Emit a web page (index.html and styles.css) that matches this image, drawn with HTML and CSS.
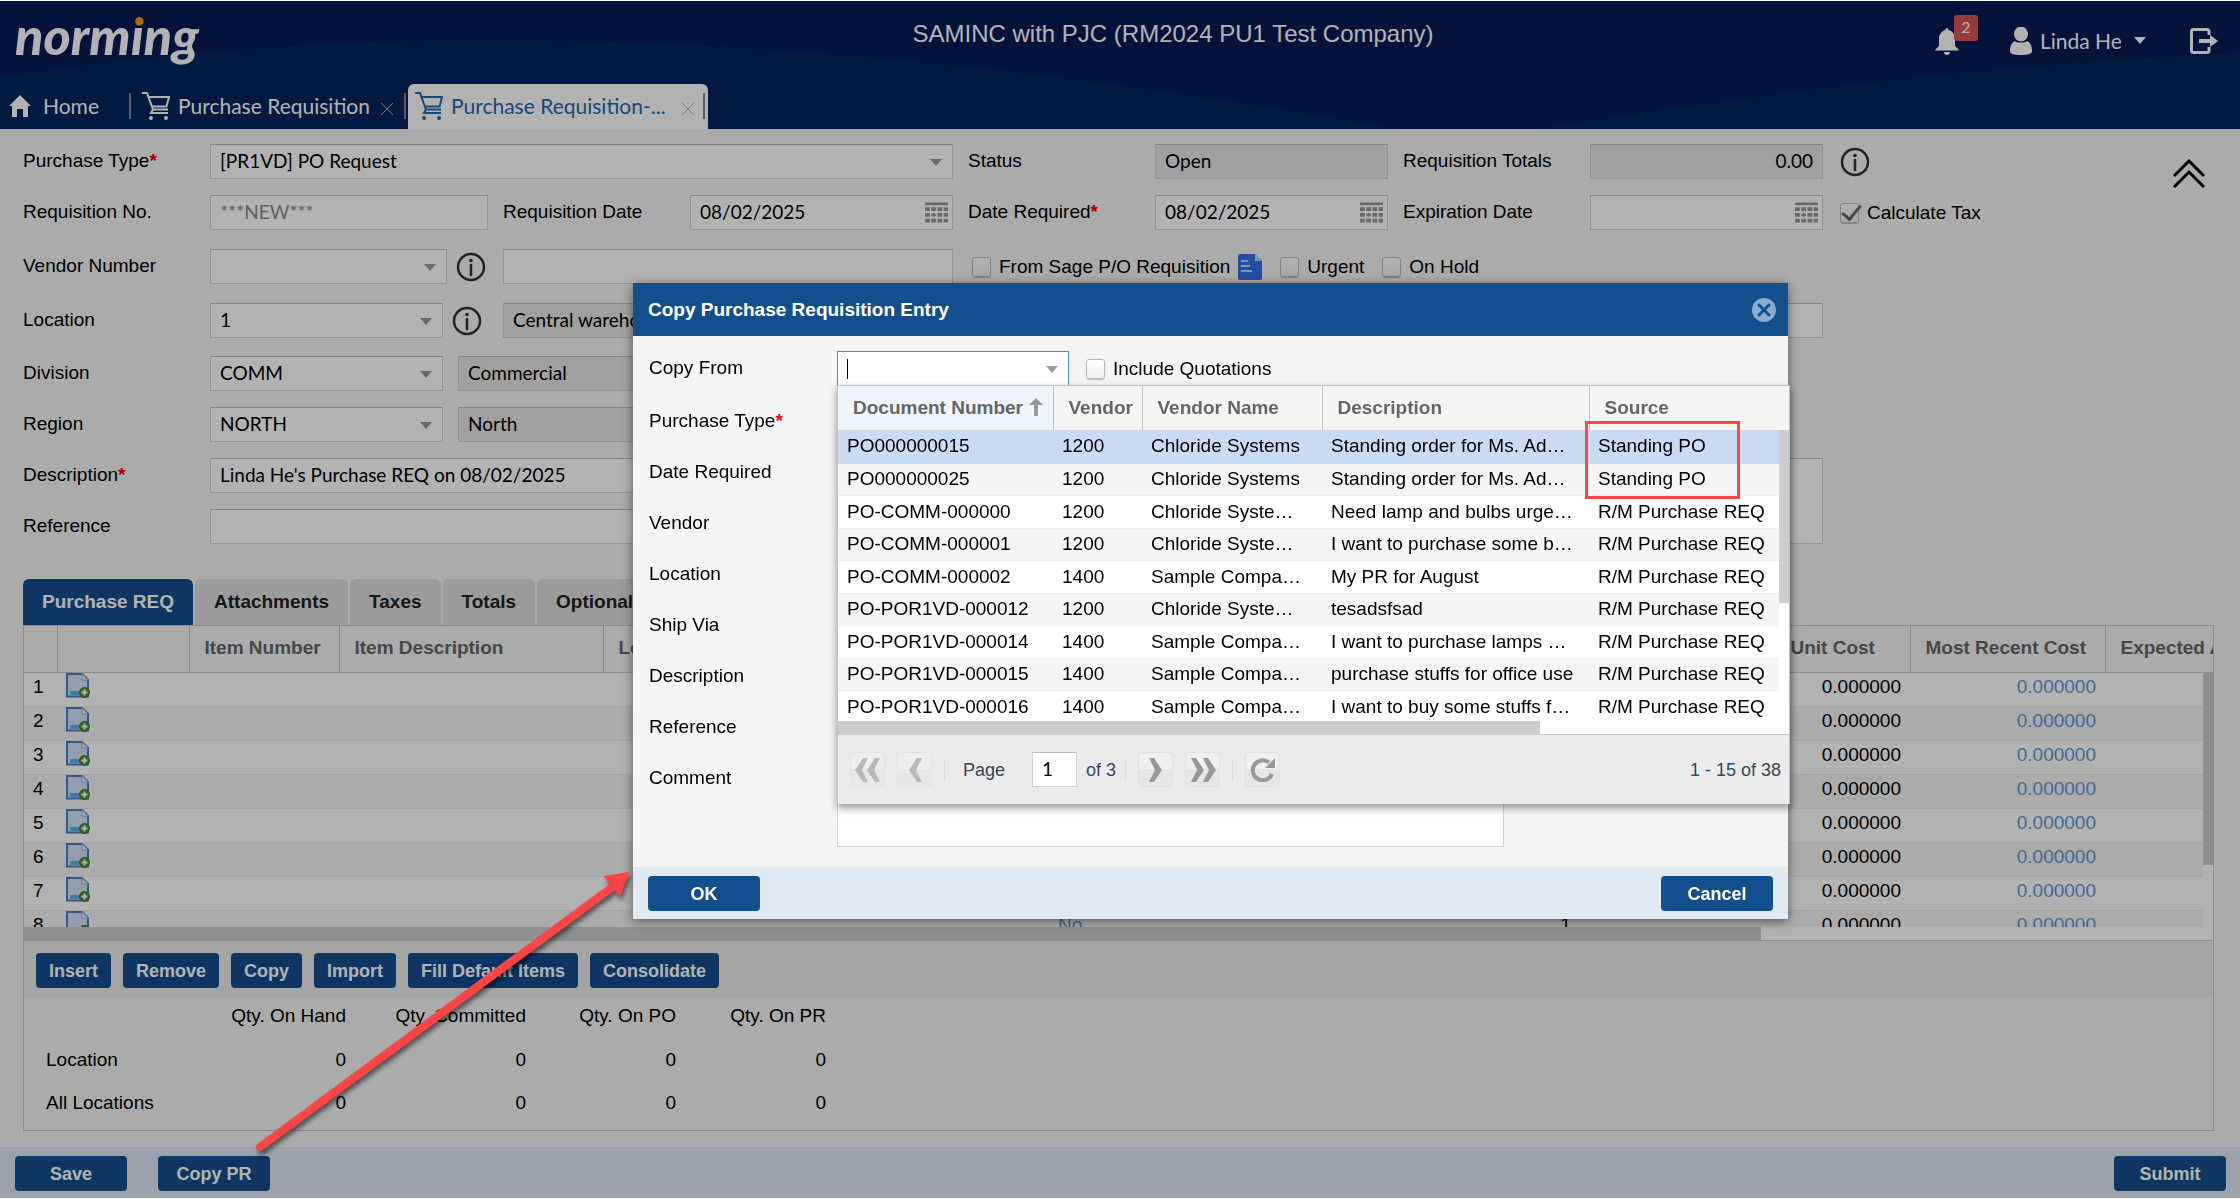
FILE: index.html
```html
<!DOCTYPE html>
<html lang="en">
<head>
  <meta charset="UTF-8">
  <title>Purchase Requisition</title>
  <meta name="viewport" content="width=device-width, initial-scale=1">
  <link rel="stylesheet" href="styles.css">
</head>
<body>
  <svg class="defs" aria-hidden="true">
    <symbol id="i-cart" viewBox="0 0 28 28">
      <path d="M0 1h5l6 16.5h15M6 5h21l-2.500 9.500H10M11 17.500l-2 3.500h17" fill="none" stroke="currentColor" stroke-width="2"/>
      <circle cx="9" cy="26" r="2" fill="currentColor"/><circle cx="24" cy="26" r="2" fill="currentColor"/>
    </symbol>
    <symbol id="i-info" viewBox="0 0 30 30">
      <circle cx="15" cy="15" r="13" fill="none" stroke="#333" stroke-width="2.500"/>
      <circle cx="15" cy="8.500" r="1.800" fill="#333"/><path d="M15 13v10" stroke="#333" stroke-width="2.600" stroke-linecap="round"/>
    </symbol>
    <symbol id="i-cal" viewBox="0 0 24 22">
      <path d="M0 0h24v3H0zM0 5h5v4H0zM6.500 5h5v4h-5zM13 5h5v4h-5zM19.500 5H24v4h-4.500zM0 11h5v4H0zM8 11h2v4H8zM6.500 12h5v2h-5zM13 11h5v4h-5zM19.500 11H24v4h-4.500zM0 17h5v4H0zM6.500 17h5v4h-5zM13 17h5v4h-5zM19.500 17H24v4h-4.500z" fill="#999"/>
    </symbol>
    <symbol id="i-add" viewBox="0 0 24 25">
      <path d="M1 1h15l6 6v16.500H1z" fill="#cfe2f8" stroke="#4a7fc0" stroke-width="2"/>
      <path d="M16 1v6h6" fill="#f2f8ff" stroke="#8fb4de"/>
      <path d="M4 18h13v4H4z" fill="#5fb4e6"/>
      <circle cx="18.500" cy="19.500" r="5" fill="#4f8f2f" stroke="#3b7420"/>
      <path d="M18.500 16.500v6M15.500 19.500h6" stroke="#fff" stroke-width="2"/>
    </symbol>
  </svg>

  <div class="page">
    <header class="header">
      <svg class="waves" viewBox="0 0 2240 128" preserveAspectRatio="none" aria-hidden="true">
        <path d="M0 75C180 50 330 39 480 39C850 39 1150 85 1400 128H0z" fill="#03265e"/>
        <path d="M1530 128C1750 95 1950 65 2240 52V128z" fill="#03265e"/>
      </svg>
      <div class="header-top">
        <div class="logo">norm<span class="logo-i">i</span>ng</div>
        <div class="company">SAMINC with PJC (RM2024 PU1 Test Company)</div>
        <div class="user-area">
          <button class="bell" aria-label="Notifications">
            <svg width="24" height="27" viewBox="0 0 24 27"><path d="M12 0c1 0 1.500 1 1.500 2C18 3 20 7 20 11v6c0 2 3 3 4 5.500H0C1 20 4 19 4 17v-6c0-4 2-8 6.500-9 0-1 .5-2 1.500-2zM9 24h6c0 2-1.500 3-3 3s-3-1-3-3z" fill="#fff"/></svg>
            <span class="badge">2</span>
          </button>
          <button class="user">
            <svg width="22" height="28" viewBox="0 0 22 28"><ellipse cx="11" cy="7" rx="7" ry="7.500" fill="#fff"/><path d="M5 14c2 2 10 2 12 0 4 2 5 6 5 10 0 3-4 4-11 4S0 27 0 24c0-4 1-8 5-10z" fill="#fff"/></svg>
            Linda He
            <span class="caret"></span>
          </button>
          <button class="logout" aria-label="Log out">
            <svg width="28" height="26" viewBox="0 0 28 26"><path d="M19 7V3.500Q19 1.500 17 1.500H3.500Q1.500 1.500 1.500 3.500v19q0 2 2 2H17q2 0 2-2V19" fill="none" stroke="#fff" stroke-width="3"/><path d="M9 11h11V7l8 6-8 6v-4H9z" fill="#fff"/></svg>
          </button>
        </div>
      </div>
      <nav class="tabs">
        <a class="tab tab-home" href="#"><svg width="22" height="22" viewBox="0 0 22 22"><path d="M11 0l11 11h-3v11h-5v-8H8v8H3V11H0z" fill="#fff"/></svg>Home</a>
        <a class="tab tab-list" href="#"><svg class="cart"><use href="#i-cart"/></svg>Purchase Requisition<svg class="tab-x" viewBox="0 0 12 12"><path d="M0 0l12 12M12 0L0 12"/></svg></a>
        <a class="tab tab-active" href="#"><svg class="cart"><use href="#i-cart"/></svg>Purchase Requisition-...<svg class="tab-x tab-x-last" viewBox="0 0 12 12"><path d="M0 0l12 12M12 0L0 12"/></svg></a>
      </nav>
    </header>

    <main class="main">
      <section class="form">
        <div class="row">
          <div class="group group-main">
            <label for="ptype">Purchase Type<b class="req">*</b></label>
            <div class="combo grow"><select id="ptype" class="field"><option>[PR1VD] PO Request</option></select></div>
          </div>
          <div class="group">
            <label for="status">Status</label>
            <input id="status" class="field grow" value="Open" readonly>
          </div>
          <div class="group">
            <label for="totals">Requisition Totals</label>
            <input id="totals" class="field grow num" value="0.00" readonly>
          </div>
          <svg class="info"><use href="#i-info"/></svg>
          <button class="collapse" aria-label="Collapse"><svg width="32" height="29" viewBox="0 0 32 29" fill="none" stroke="#000" stroke-width="3"><path d="M1 17L16 2l15 15M1 28l15-15 15 15"/></svg></button>
        </div>

        <div class="row row-wide">
          <div class="group group-main">
            <label for="reqno">Requisition No.</label>
            <input id="reqno" class="field w-reqno" placeholder="***NEW***">
            <label for="reqdate" class="label-next">Requisition Date</label>
            <div class="date grow"><input id="reqdate" class="field" value="08/02/2025"><svg><use href="#i-cal"/></svg></div>
          </div>
          <div class="group">
            <label for="datereq">Date Required<b class="req">*</b></label>
            <div class="date grow"><input id="datereq" class="field" value="08/02/2025"><svg><use href="#i-cal"/></svg></div>
          </div>
          <div class="group">
            <label for="expdate">Expiration Date</label>
            <div class="date grow"><input id="expdate" class="field"><svg><use href="#i-cal"/></svg></div>
          </div>
          <label class="check"><input type="checkbox" checked>Calculate Tax</label>
        </div>

        <div class="row row-wide">
          <div class="group group-main">
            <label for="vendno">Vendor Number</label>
            <div class="combo w-vendor"><select id="vendno" class="field"><option></option></select></div>
            <svg class="info info-look"><use href="#i-info"/></svg>
            <input class="field w-name" aria-label="Vendor name">
          </div>
          <div class="checks">
            <label class="check"><input type="checkbox">From Sage P/O Requisition</label>
            <svg class="doc" viewBox="0 0 24 26"><path d="M2 0h15l7 7v17q0 2-2 2H2q-2 0-2-2V2Q0 0 2 0z" fill="#3172e8"/><path d="M17 0l7 7h-7z" fill="#a8e4f0"/><path d="M3 7h7M3 12h9M3 17h11" stroke="#a8e4f0" stroke-width="2"/></svg>
            <label class="check"><input type="checkbox">Urgent</label>
            <label class="check"><input type="checkbox">On Hold</label>
          </div>
        </div>

        <div class="row row-loc">
          <div class="group group-main">
            <label for="loc">Location</label>
            <div class="combo w-combo"><select id="loc" class="field"><option>1</option></select></div>
            <svg class="info info-look"><use href="#i-info"/></svg>
            <input class="field w-name" aria-label="Location name" value="Central warehouse - Seattle" readonly>
          </div>
          <div class="group group-wide">
            <label for="shipvia">Ship Via</label>
            <input id="shipvia" class="field grow">
          </div>
        </div>

        <div class="row">
          <div class="group group-main">
            <label for="division">Division</label>
            <div class="combo w-combo"><select id="division" class="field"><option>COMM</option></select></div>
            <input class="field w-desc" aria-label="Division name" value="Commercial" readonly>
          </div>
        </div>

        <div class="row">
          <div class="group group-main">
            <label for="region">Region</label>
            <div class="combo w-combo"><select id="region" class="field"><option>NORTH</option></select></div>
            <input class="field w-desc" aria-label="Region name" value="North" readonly>
          </div>
        </div>

        <div class="row row-notes">
          <div class="group-main">
            <div class="group group-stack">
              <label for="desc">Description<b class="req">*</b></label>
              <input id="desc" class="field grow" value="Linda He's Purchase REQ on 08/02/2025">
            </div>
            <div class="group">
              <label for="ref">Reference</label>
              <input id="ref" class="field grow">
            </div>
          </div>
          <div class="group group-wide">
            <label for="comment">Comment</label>
            <textarea id="comment" class="field grow notes"></textarea>
          </div>
        </div>
      </section>

      <div class="subtabs">
        <button class="subtab subtab-on">Purchase REQ</button>
        <button class="subtab">Attachments</button>
        <button class="subtab">Taxes</button>
        <button class="subtab">Totals</button>
        <button class="subtab">Optional Fields</button>
      </div>

      <section class="panel">
        <div class="grid">
          <table class="lines">
            <colgroup><col class="c-no"><col class="c-icon"><col class="c-item"><col class="c-desc"><col class="c-loc"><col class="c-com"><col class="c-qty"><col class="c-um"><col class="c-unit"><col class="c-cost"><col class="c-exp"></colgroup>
            <thead>
              <tr><th></th><th></th><th>Item Number</th><th>Item Description</th><th>Location</th><th></th><th></th><th></th><th>Unit Cost</th><th>Most Recent Cost</th><th>Expected Arrival</th></tr>
            </thead>
            <tbody>
              <tr><td>1</td><td><svg class="add"><use href="#i-add"/></svg></td><td></td><td></td><td></td><td class="link">No</td><td class="num">1</td><td></td><td class="num">0.000000</td><td class="num link">0.000000</td><td></td></tr>
              <tr><td>2</td><td><svg class="add"><use href="#i-add"/></svg></td><td></td><td></td><td></td><td class="link">No</td><td class="num">1</td><td></td><td class="num">0.000000</td><td class="num link">0.000000</td><td></td></tr>
              <tr><td>3</td><td><svg class="add"><use href="#i-add"/></svg></td><td></td><td></td><td></td><td class="link">No</td><td class="num">1</td><td></td><td class="num">0.000000</td><td class="num link">0.000000</td><td></td></tr>
              <tr><td>4</td><td><svg class="add"><use href="#i-add"/></svg></td><td></td><td></td><td></td><td class="link">No</td><td class="num">1</td><td></td><td class="num">0.000000</td><td class="num link">0.000000</td><td></td></tr>
              <tr><td>5</td><td><svg class="add"><use href="#i-add"/></svg></td><td></td><td></td><td></td><td class="link">No</td><td class="num">1</td><td></td><td class="num">0.000000</td><td class="num link">0.000000</td><td></td></tr>
              <tr><td>6</td><td><svg class="add"><use href="#i-add"/></svg></td><td></td><td></td><td></td><td class="link">No</td><td class="num">1</td><td></td><td class="num">0.000000</td><td class="num link">0.000000</td><td></td></tr>
              <tr><td>7</td><td><svg class="add"><use href="#i-add"/></svg></td><td></td><td></td><td></td><td class="link">No</td><td class="num">1</td><td></td><td class="num">0.000000</td><td class="num link">0.000000</td><td></td></tr>
              <tr><td>8</td><td><svg class="add"><use href="#i-add"/></svg></td><td></td><td></td><td></td><td class="link">No</td><td class="num">1</td><td></td><td class="num">0.000000</td><td class="num link">0.000000</td><td></td></tr>
            </tbody>
          </table>
          <div class="vscroll"><div class="thumb"></div></div>
        </div>
        <div class="hscroll"><div class="thumb"></div></div>
        <div class="toolbar">
          <button class="btn">Insert</button>
          <button class="btn">Remove</button>
          <button class="btn">Copy</button>
          <button class="btn">Import</button>
          <button class="btn">Fill Default Items</button>
          <button class="btn">Consolidate</button>
        </div>
        <table class="qty">
          <tr><th></th><th>Qty. On Hand</th><th>Qty. Committed</th><th>Qty. On PO</th><th>Qty. On PR</th></tr>
          <tr><td>Location</td><td>0</td><td>0</td><td>0</td><td>0</td></tr>
          <tr><td>All Locations</td><td>0</td><td>0</td><td>0</td><td>0</td></tr>
        </table>
      </section>
    </main>

    <footer class="footer">
      <button class="btn btn-wide">Save</button>
      <button class="btn btn-wide">Copy PR</button>
      <button class="btn btn-wide btn-right">Submit</button>
    </footer>
  </div>

  <div class="mask"></div>

  <div class="dialog" role="dialog" aria-labelledby="dlg-title">
    <div class="dialog-head">
      <span id="dlg-title">Copy Purchase Requisition Entry</span>
      <button class="close" aria-label="Close"><svg width="24" height="24" viewBox="0 0 24 24"><circle cx="12" cy="12" r="12" fill="#8aaccd"/><path d="M7 7l10 10M17 7L7 17" stroke="#134f8d" stroke-width="3" stroke-linecap="round"/></svg></button>
    </div>
    <div class="dialog-body">
      <div class="drow drow-first">
        <label for="copyfrom">Copy From</label>
        <div class="combo combo-open"><input id="copyfrom" class="field"><span class="cursor"></span></div>
        <label class="check"><input type="checkbox">Include Quotations</label>
      </div>
      <div class="drow"><label for="d1">Purchase Type<b class="req">*</b></label><input id="d1" class="field w-dlg"></div>
      <div class="drow"><label for="d2">Date Required</label><input id="d2" class="field w-dlg"></div>
      <div class="drow"><label for="d3">Vendor</label><input id="d3" class="field w-dlg"></div>
      <div class="drow"><label for="d4">Location</label><input id="d4" class="field w-dlg"></div>
      <div class="drow"><label for="d5">Ship Via</label><input id="d5" class="field w-dlg"></div>
      <div class="drow"><label for="d6">Description</label><input id="d6" class="field w-dlg"></div>
      <div class="drow"><label for="d7">Reference</label><input id="d7" class="field w-dlg"></div>
      <div class="drow drow-last"><label for="d8">Comment</label><textarea id="d8" class="field w-dlg notes"></textarea></div>
    </div>
    <div class="dialog-foot">
      <button class="btn btn-wide">OK</button>
      <button class="btn btn-wide">Cancel</button>
    </div>

    <div class="picker">
      <div class="picker-grid">
        <table class="docs">
          <colgroup><col class="p-doc"><col class="p-ven"><col class="p-name"><col class="p-desc"><col class="p-src"></colgroup>
          <thead>
            <tr><th class="sorted">Document Number<svg class="sort" viewBox="0 0 14 18"><path d="M7 0l7 7H9v11H5V7H0z" fill="#999"/></svg></th><th>Vendor</th><th>Vendor Name</th><th>Description</th><th>Source</th></tr>
          </thead>
          <tbody>
            <tr class="picked"><td>PO000000015</td><td>1200</td><td>Chloride Systems</td><td>Standing order for Ms. Ad…</td><td>Standing PO</td></tr>
            <tr><td>PO000000025</td><td>1200</td><td>Chloride Systems</td><td>Standing order for Ms. Ad…</td><td>Standing PO</td></tr>
            <tr><td>PO-COMM-000000</td><td>1200</td><td>Chloride Syste…</td><td>Need lamp and bulbs urge…</td><td>R/M Purchase REQ</td></tr>
            <tr><td>PO-COMM-000001</td><td>1200</td><td>Chloride Syste…</td><td>I want to purchase some b…</td><td>R/M Purchase REQ</td></tr>
            <tr><td>PO-COMM-000002</td><td>1400</td><td>Sample Compa…</td><td>My PR for August</td><td>R/M Purchase REQ</td></tr>
            <tr><td>PO-POR1VD-000012</td><td>1200</td><td>Chloride Syste…</td><td>tesadsfsad</td><td>R/M Purchase REQ</td></tr>
            <tr><td>PO-POR1VD-000014</td><td>1400</td><td>Sample Compa…</td><td>I want to purchase lamps …</td><td>R/M Purchase REQ</td></tr>
            <tr><td>PO-POR1VD-000015</td><td>1400</td><td>Sample Compa…</td><td>purchase stuffs for office use</td><td>R/M Purchase REQ</td></tr>
            <tr><td>PO-POR1VD-000016</td><td>1400</td><td>Sample Compa…</td><td>I want to buy some stuffs f…</td><td>R/M Purchase REQ</td></tr>
          </tbody>
        </table>
        <div class="vscroll"><div class="thumb"></div></div>
      </div>
      <div class="hscroll"><div class="thumb"></div></div>
      <div class="pager">
        <button class="pg" disabled aria-label="First page"><svg viewBox="0 0 26 24"><path d="M8 0h5L7 12l6 12H8L0 12zM20 0h5l-6 12 6 12h-5l-8-12z"/></svg></button>
        <button class="pg" disabled aria-label="Previous page"><svg viewBox="0 0 26 24"><path d="M15 0h5l-6 12 6 12h-5L7 12z"/></svg></button>
        <span class="sep"></span>
        <label for="pageno" class="pg-label">Page</label>
        <input id="pageno" class="field pg-no" value="1">
        <span class="pg-total">of 3</span>
        <span class="sep"></span>
        <button class="pg" aria-label="Next page"><svg viewBox="0 0 26 24"><path d="M11 0H6l6 12-6 12h5l8-12z"/></svg></button>
        <button class="pg" aria-label="Last page"><svg viewBox="0 0 26 24"><path d="M6 0H1l6 12-6 12h5l8-12zM18 0h-5l6 12-6 12h5l8-12z"/></svg></button>
        <span class="sep"></span>
        <button class="pg" aria-label="Refresh"><svg viewBox="0 0 26 24"><path d="M22 16A10 10 0 1 1 19 4.500" fill="none" stroke="#999" stroke-width="4"/><path d="M25 0v10H15z"/></svg></button>
        <span class="count">1 - 15 of 38</span>
      </div>
    </div>
  </div>

  <!-- callouts -->
  <div class="mark"></div>
  <svg class="arrow" viewBox="0 0 390 290" aria-hidden="true">
    <path d="M11 275L362 16" stroke="#ff4545" stroke-width="8" stroke-linecap="round"/>
    <path d="M379 1l-8.500 22-14-18z" fill="#ff4545" stroke="#ff4545" stroke-width="2"/>
  </svg>
</body>
</html>
```
FILE: styles.css
```css
* {
  box-sizing: border-box;
}

body {
  margin: 0;
  padding: 1px 0;
  font-family: "Liberation Sans", Arial, sans-serif;
  font-size: 19px;
  line-height: 24px;
  color: #000;
  background: #fff;
}

button, input, select, textarea {
  font: inherit;
  color: inherit;
  margin: 0;
}

button {
  border: 0;
  padding: 0;
  background: none;
  cursor: pointer;
}

.defs {
  position: absolute;
  width: 0;
  height: 0;
}

.page {
  display: flex;
  flex-direction: column;
  min-height: calc(100vh - 2px);
  background: #f5f5f5;
}

/* header */
.header {
  position: relative;
  height: 128px;
  display: flex;
  flex-direction: column;
  justify-content: space-between;
  background: #061a56;
  color: #fff;
  font-family: Lato, sans-serif;
}

.waves {
  position: absolute;
  width: 100%;
  height: 100%;
}

.header-top {
  position: relative;
  display: flex;
  align-items: flex-start;
  height: 83px;
}

.logo {
  width: 411px;
  padding-left: 15px;
  font-size: 52px;
  font-weight: 900;
  font-style: italic;
  line-height: 68px;
}

.logo-i {
  background: linear-gradient(#f6a000 24px, #fff 24px);
  background-clip: text;
  color: transparent;
}

.company {
  flex: 1;
  padding-top: 21px;
  text-align: center;
  font-family: "Liberation Sans", Arial, sans-serif;
  font-size: 24px;
}

.user-area {
  display: flex;
  align-items: center;
  padding: 25px 22px 0 0;
}

.bell {
  position: relative;
  display: flex;
  width: 75px;
  padding-top: 2px;
}

.badge {
  position: absolute;
  left: 19px;
  top: -11px;
  width: 24px;
  height: 26px;
  border-radius: 3px;
  background: #dc5552;
  font-size: 16px;
  line-height: 24px;
}

.user {
  display: flex;
  align-items: center;
  gap: 8px;
  width: 180px;
  font-size: 21px;
}

.caret {
  margin-left: 4px;
  border: 6px solid transparent;
  border-top: 7px solid #fff;
  border-bottom: 0;
}

.logout {
  display: flex;
}

.tabs {
  position: relative;
  display: flex;
}

.tab {
  display: flex;
  align-items: center;
  height: 45px;
  padding-bottom: 2px;
  color: #fff;
  font-size: 21px;
  text-decoration: none;
  white-space: nowrap;
}

.tab::after {
  content: "";
  width: 2px;
  height: 26px;
  margin-left: auto;
  background: #7a8599;
}

.tab-home {
  width: 131px;
  padding-left: 9px;
  gap: 12px;
}

.cart {
  width: 28px;
  height: 28px;
  margin-right: 8px;
}

.tab-list {
  width: 277px;
  padding-left: 11px;
  padding-right: 2px;
}

.tab-active {
  width: 300px;
  padding-left: 7px;
  padding-right: 3px;
  border-radius: 6px 6px 0 0;
  background: #fff;
  color: #2469a8;
}

.tab-x {
  width: 12px;
  height: 12px;
  margin: 6px 0 0 11px;
  stroke: #a5adbb;
  stroke-width: 1;
}

.tab-x-last {
  margin-left: 16px;
}

/* form */
.main {
  flex: 1;
  display: flex;
  flex-direction: column;
  padding: 15px 26px 16px 23px;
}

.row {
  display: flex;
  gap: 15px;
  height: 35px;
  margin-bottom: 16px;
}

.row-wide {
  margin-bottom: 19px;
}

.row-loc {
  margin-bottom: 18px;
}

.row-notes {
  height: 86px;
  margin-bottom: 35px;
}

.group {
  display: flex;
  align-items: center;
  width: 420px;
}

.group-main {
  width: 930px;
}

.group-wide {
  width: 855px;
}

.group-stack {
  margin-bottom: 16px;
}

.group-main .group {
  width: auto;
}

.group > label {
  width: 187px;
  padding-bottom: 2px;
}

.group > .label-next {
  width: 202px;
  padding-left: 15px;
}

.grow {
  flex: 1;
  min-width: 0;
}

.req {
  color: #e00;
}

.field {
  display: block;
  width: 100%;
  height: 35px;
  padding: 0 9px 2px;
  border: 1px solid #d2d2d2;
  border-top-color: #bbb;
  border-radius: 0;
  background: #fff;
  font-family: Lato, sans-serif;
  appearance: none;
  outline: 0;
}

.grow.field {
  width: auto;
}

.field:read-only:not(select) {
  background: #e6e6e6;
}

.field::placeholder {
  color: #888;
}

.field.w-reqno {
  width: 278px;
}

.w-combo {
  width: 233px;
}

.w-vendor {
  width: 237px;
}

.field.w-name {
  width: 450px;
  margin-left: auto;
}

.field.w-desc {
  flex: 1;
  margin-left: 15px;
}

.field.notes {
  height: 86px;
  resize: none;
}

.field.num, .num {
  text-align: right;
}

.combo, .date {
  position: relative;
}

.combo::after {
  content: "";
  position: absolute;
  right: 11px;
  top: 15px;
  border: 6px solid transparent;
  border-top: 7px solid #999;
  border-bottom: 0;
  pointer-events: none;
}

.date svg {
  position: absolute;
  right: 5px;
  top: 7px;
  width: 23px;
  height: 22px;
}

.info {
  width: 30px;
  height: 30px;
  align-self: center;
}

.info-look {
  margin-left: 9px;
}

.row > .info, .row > .check {
  margin-left: 2px;
}

.check {
  display: flex;
  align-items: center;
  gap: 8px;
  white-space: nowrap;
}

.check input {
  appearance: none;
  position: relative;
  width: 19px;
  height: 20px;
  border: 1px solid #bbb;
  border-radius: 3px;
  background: linear-gradient(#fff, #f0f0f0);
  box-shadow: 0 1px 1px #bbb;
}

.check input:checked::after {
  content: "";
  position: absolute;
  left: 5px;
  top: -3px;
  width: 8px;
  height: 16px;
  border: solid #666;
  border-width: 0 3px 3px 0;
  transform: rotate(40deg);
}

.checks {
  display: flex;
  align-items: center;
  gap: 18px;
  padding-left: 4px;
}

.doc {
  width: 24px;
  height: 26px;
  margin-left: -10px;
}

.collapse {
  margin: 15px 9px 0 auto;
  align-self: flex-start;
}

.collapse svg {
  display: block;
}

/* detail tabs and grid */
.subtabs {
  display: flex;
  gap: 2px;
}

.subtab {
  height: 46px;
  padding: 0 19px;
  border-radius: 6px 6px 0 0;
  background: #dfdfdf;
  color: #222;
  font-weight: bold;
}

.subtab-on {
  background: #134f8d;
  color: #fff;
}

.panel {
  flex: 1;
  border: 1px solid #c8c8c8;
}

.grid {
  position: relative;
  display: flex;
  height: 301px;
  overflow: hidden;
}

table {
  border-collapse: collapse;
}

.lines {
  flex: none;
  width: 2179px;
  table-layout: fixed;
}

.c-no { width: 33px; }
.c-icon { width: 132px; }
.c-item { width: 150px; }
.c-desc { width: 264px; }
.c-loc { width: 446px; }
.c-com { width: 200px; }
.c-qty { width: 331px; }
.c-um { width: 195px; }
.c-unit { width: 135px; }
.c-cost { width: 195px; }

.lines th {
  height: 46px;
  padding: 0 0 2px 15px;
  border-right: 1px solid #c4c4c4;
  border-bottom: 1px solid #c8c8c8;
  color: #666;
  text-align: left;
  white-space: nowrap;
}

.lines th:last-child {
  border-right: 0;
}

.lines td {
  height: 34px;
  padding: 0 9px 5px;
  border-bottom: 1px solid #ededed;
  background: #fff;
}

.lines tr:nth-child(even) td {
  background: #f5f5f5;
}

.lines .link {
  color: #5c9ad6;
}

.lines td:nth-child(2) {
  padding-bottom: 8px;
}

.add {
  display: block;
  width: 24px;
  height: 25px;
}

.vscroll {
  position: relative;
  width: 10px;
  background: #fff;
}

.grid .vscroll {
  flex: 1;
  margin-top: 46px;
}

.vscroll .thumb {
  height: 193px;
  background: #cdcdcd;
}

.hscroll {
  height: 14px;
  border-bottom: 1px solid #c8c8c8;
  background: #fff;
}

.hscroll .thumb {
  width: 1737px;
  height: 14px;
  background: #cdcdcd;
}

.toolbar {
  display: flex;
  gap: 12px;
  padding: 12px;
  height: 57px;
  background: #ececec;
}

.btn {
  height: 35px;
  padding: 0 13px;
  border-radius: 4px;
  background: #134f8d;
  color: #fff;
  font-size: 18px;
  font-weight: bold;
}

.btn-wide {
  width: 112px;
}

.qty {
  margin: 0 22px;
}

.qty th, .qty td {
  height: 43px;
  padding: 0;
  font-weight: normal;
  text-align: right;
}

.qty th {
  height: 40px;
  width: 150px;
  padding-bottom: 4px;
}

.qty th:nth-child(3) {
  width: 180px;
}

.qty td:first-child {
  text-align: left;
}

.footer {
  display: flex;
  gap: 31px;
  height: 51px;
  padding: 9px 14px 7px 15px;
  background: #dfe8f2;
}

.btn-right {
  margin-left: auto;
}

.mask {
  position: fixed;
  inset: 1px 0;
  background: rgba(0, 0, 0, 0.3);
}

/* copy dialog */
.dialog {
  position: absolute;
  left: 633px;
  top: 283px;
  width: 1155px;
  background: #f5f5f5;
  box-shadow: 0 2px 10px rgba(0, 0, 0, 0.5);
}

.dialog-head {
  display: flex;
  align-items: center;
  justify-content: space-between;
  height: 53px;
  padding: 0 12px 0 15px;
  background: #134f8d;
  color: #fff;
  font-weight: bold;
}

.close svg {
  display: block;
}

.dialog-body {
  padding: 15px 16px 20px;
}

.drow {
  display: flex;
  align-items: center;
  height: 35px;
  margin-bottom: 16px;
}

.drow > label:first-child {
  width: 188px;
  padding-bottom: 2px;
}

.drow .check {
  margin-left: 17px;
}

.drow-first {
  margin-bottom: 18px;
}

.drow-last {
  align-items: flex-start;
  height: 86px;
  margin: 0;
}

.drow-last label {
  line-height: 33px;
}

.w-dlg {
  width: 667px;
}

.combo-open {
  width: 232px;
}

.combo-open .field {
  border-color: #3892d4;
}

.cursor {
  position: absolute;
  left: 10px;
  top: 8px;
  width: 1px;
  height: 20px;
  background: #000;
}

.dialog-foot {
  display: flex;
  justify-content: space-between;
  height: 52px;
  padding: 9px 15px 8px;
  background: #e0eaf3;
}

.picker {
  position: absolute;
  left: 204px;
  top: 102px;
  width: 953px;
  border: 1px solid #c0c0c0;
  border-bottom: 0;
  background: #fff;
  box-shadow: 0 4px 8px rgba(0, 0, 0, 0.4);
}

.picker-grid {
  display: flex;
  height: 335px;
  overflow: hidden;
}

.docs {
  flex: none;
  width: 941px;
  table-layout: fixed;
}

.p-doc { width: 215px; }
.p-ven { width: 89px; }
.p-name { width: 180px; }
.p-desc { width: 267px; }

.docs th {
  height: 44px;
  padding: 0 0 0 15px;
  border-right: 1px solid #c0c0c0;
  background: #f5f5f5;
  color: #666;
  text-align: left;
  white-space: nowrap;
}

.docs th:last-child {
  border-right: 0;
}

.docs th.sorted {
  background: #eef5fc;
}

.sort {
  width: 14px;
  height: 18px;
  margin-left: 6px;
  vertical-align: -2px;
}

.docs td {
  height: 32px;
  padding: 0 4px 0 9px;
  border-bottom: 1px solid #ededed;
  overflow: hidden;
  text-overflow: ellipsis;
  white-space: nowrap;
}

.docs tr:nth-child(odd) td {
  height: 33px;
}

.docs tr:nth-child(even) td {
  background: #f5f5f5;
}

.docs .picked td {
  border-color: #c9dcf2;
  background: #c9dcf2;
}

.picker-grid .vscroll {
  padding-top: 44px;
  background: linear-gradient(#f5f5f5 44px, #fff 44px);
}

.picker .vscroll .thumb {
  height: 173px;
}

.picker .hscroll .thumb {
  width: 702px;
}

.pager {
  display: flex;
  align-items: center;
  gap: 12px;
  height: 69px;
  padding: 0 8px 0 12px;
  background: #ebebeb;
  color: #33475a;
  font-size: 18px;
}

.pg {
  display: flex;
  align-items: center;
  justify-content: center;
  width: 35px;
  height: 35px;
  border: 1px solid #e2e2e2;
  border-radius: 4px;
  background: linear-gradient(#f0f0f0 50%, #e6e6e6 50%);
}

.pg svg {
  width: 26px;
  height: 24px;
  fill: #999;
}

.pg:disabled {
  opacity: 0.6;
}

.sep {
  width: 1px;
  height: 21px;
  background: #ddd;
}

.pg-label {
  width: 63px;
  padding-left: 6px;
}

.field.pg-no {
  width: 45px;
  margin-right: -3px;
  color: #000;
  font-size: 19px;
}

.pg-total {
  margin-right: -3px;
}

.count {
  margin-left: auto;
}

/* callouts */
.mark {
  position: absolute;
  left: 1585px;
  top: 421px;
  width: 155px;
  height: 78px;
  border: 3px solid #ff4545;
}

.arrow {
  position: absolute;
  left: 249px;
  top: 872px;
  width: 390px;
  height: 290px;
  filter: drop-shadow(2px 4px 2px rgba(0, 0, 0, 0.5));
}
```
